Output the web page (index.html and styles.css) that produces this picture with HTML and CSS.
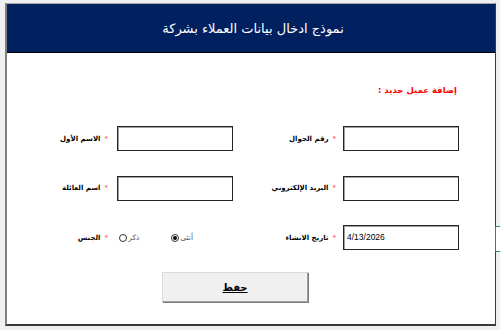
FILE: index.html
```html
<!DOCTYPE html>
<html lang="ar">
<head>
<meta charset="utf-8">
<link rel="stylesheet" href="styles.css">
</head>
<body>
<div class="cell-select"></div>
<div class="window">
  <div class="header"><span class="title">نموذج ادخال بيانات العملاء بشركة</span></div>
  <div class="content">
    <div class="heading">إضافة عميل جديد :</div>
    <div class="form">
      <div class="field"></div>
      <div class="label label-r"><span class="star">*</span><span>رقم الجوال</span></div>
      <div class="field"></div>
      <div class="label label-l"><span class="star">*</span><span>الاسم الأول</span></div>

      <div class="field"></div>
      <div class="label label-r"><span class="star">*</span><span>البريد الإلكتروني</span></div>
      <div class="field"></div>
      <div class="label label-l"><span class="star">*</span><span>اسم العائلة</span></div>

      <div class="field date">4/13/2026</div>
      <div class="label label-r"><span class="star">*</span><span>تاريخ الانشاء</span></div>
      <div class="radios">
        <div class="option"><span class="opt-text">أنثى</span><span class="circle checked"></span></div>
        <div class="option"><span class="opt-text">ذكر</span><span class="circle"></span></div>
      </div>
      <div class="label label-l"><span class="star">*</span><span>الجنس</span></div>
    </div>
    <div class="actions"><button class="save">حفظ</button></div>
  </div>
</div>
</body>
</html>
```
FILE: styles.css
```css
html, body {
  margin: 0;
  padding: 0;
  background: #f0f0f0;
  width: 500px;
  height: 330px;
  overflow: hidden;
  font-family: "DejaVu Sans", "Liberation Sans", sans-serif;
}
.cell-select {
  position: absolute;
  left: 495px;
  top: 226px;
  width: 10px;
  height: 26px;
  box-sizing: border-box;
  border: 1px solid #2e8b57;
  background: #ffffff;
  z-index: 2;
}
.window {
  position: relative;
  z-index: 1;
  margin: 3px 0 0 5px;
  width: 491px;
  height: 323px;
  box-sizing: border-box;
  border-top: 1px solid #a9a9a9;
  border-left: 2px solid #7f7f7f;
  border-right: 1px solid #3a3a3a;
  border-bottom: 2px solid #3a3a3a;
  background: #ffffff;
  display: flex;
  flex-direction: column;
}
.header {
  height: 48px;
  background: #002060;
  border-bottom: 1px solid #000000;
  display: flex;
  align-items: center;
  justify-content: center;
}
.title {
  color: #ffffff;
  font-size: 13px;
  direction: rtl;
  padding-left: 4px;
}
.content {
  flex: 1;
  direction: rtl;
  padding-top: 30px;
}
.heading {
  color: #ff0000;
  font-weight: bold;
  font-size: 8.5px;
  line-height: 14px;
  padding-right: 38px;
}
.form {
  margin-top: 29px;
  padding-right: 36px;
  display: grid;
  grid-template-columns: 116px 110px 116px 1fr;
  grid-auto-rows: 25px;
  row-gap: 24.5px;
}
.field {
  box-sizing: border-box;
  border: 1px solid #262626;
  box-shadow: inset 1px 1px 0 #a0a0a0;
  background: #ffffff;
}
.date {
  direction: ltr;
  text-align: left;
  font-family: "Liberation Sans", Arial, sans-serif;
  font-size: 8.5px;
  line-height: 23px;
  padding-left: 3px;
  color: #000;
}
.label {
  display: flex;
  align-items: center;
  gap: 4px;
  font-size: 7px;
  font-weight: bold;
  color: #000;
}
.label-r { padding-right: 7px; }
.label-l { padding-right: 9px; }
.star {
  color: #ff3b3b;
  font-size: 7px;
  font-weight: normal;
}
.radios {
  display: flex;
  align-items: center;
  padding-right: 40px;
  gap: 32px;
}
.option {
  display: flex;
  align-items: center;
  gap: 1px;
  font-size: 7.5px;
  color: #555555;
}
.circle {
  width: 6px;
  height: 6px;
  border: 1px solid #333333;
  border-radius: 50%;
  background: #ffffff;
  display: flex;
  align-items: center;
  justify-content: center;
}
.circle.checked::after {
  content: "";
  width: 4px;
  height: 4px;
  border-radius: 50%;
  background: #000000;
}
.actions {
  direction: ltr;
  padding-left: 155px;
  margin-top: 22px;
}
.save {
  width: 146px;
  height: 30px;
  background: #f0f0f0;
  border: 1px solid;
  border-color: #d9d9d9 #a0a0a0 #a0a0a0 #d9d9d9;
  box-shadow: 1px 1px 0 #7a7a7a;
  font-family: "DejaVu Sans", sans-serif;
  font-weight: bold;
  font-size: 10px;
  text-decoration: underline;
  color: #000;
  padding: 0;
}
```
